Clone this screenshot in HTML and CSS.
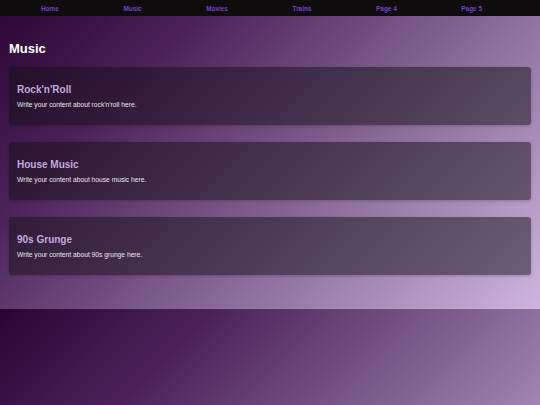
FILE: index.html
```html
<!DOCTYPE html>
<html lang="en">
<head>
    <meta charset="UTF-8">
    <meta name="viewport" content="width=device-width, initial-scale=1.0">
    <title>Music</title>
    <link rel="stylesheet" href="styles.css">
</head>
<body>

    <!-- Top navigation -->
    <nav class="navbar">
        <a href="#">Home</a>
        <a href="#">Music</a>
        <a href="#">Movies</a>
        <a href="#">Trains</a>
        <a href="#">Page 4</a>
        <a href="#">Page 5</a>
    </nav>

    <div class="content">
        <h1>Music</h1>

        <div class="section">
            <h2>Rock'n'Roll</h2>
            <p>Write your content about rock'n'roll here.</p>
        </div>

        <div class="section">
            <h2>House Music</h2>
            <p>Write your content about house music here.</p>
        </div>

        <div class="section">
            <h2>90s Grunge</h2>
            <p>Write your content about 90s grunge here.</p>
        </div>
    </div>

</body>
</html>
```

FILE: styles.css
```css
* {
    margin: 0;
    padding: 0;
    box-sizing: border-box;
}

body {
    font-family: 'Liberation Sans', Arial, Helvetica, sans-serif;
    background: linear-gradient(135deg, #2a0534, #4a2258 25%, #cdb6dd);
}

.navbar {
    height: 16px;
    display: flex;
    align-items: center;
    justify-content: space-between;
    padding: 0 58px 0 41px;
    background-color: #0e0c0d;
}

.navbar a {
    font-size: 6.4px;
    font-weight: bold;
    color: #7a3fd0;
    text-decoration: none;
}

.navbar a:hover {
    color: #a070f0;
}

.content {
    padding: 25px 9px 17px;
}

h1 {
    font-size: 13px;
    line-height: 16px;
    color: #fff;
    margin-bottom: 10px;
}

.section {
    padding: 8px;
    margin-bottom: 17px;
    border-radius: 3px;
    background-color: rgba(20, 15, 22, 0.5);
    box-shadow: 0 1px 3px rgba(0, 0, 0, 0.2);
}

.section h2 {
    font-size: 10px;
    line-height: 12px;
    margin: 9px 0 5px;
    color: #c6a8de;
}

.section p {
    font-size: 6.7px;
    line-height: 8px;
    margin-bottom: 8px;
    color: #ece6ee;
}
```
